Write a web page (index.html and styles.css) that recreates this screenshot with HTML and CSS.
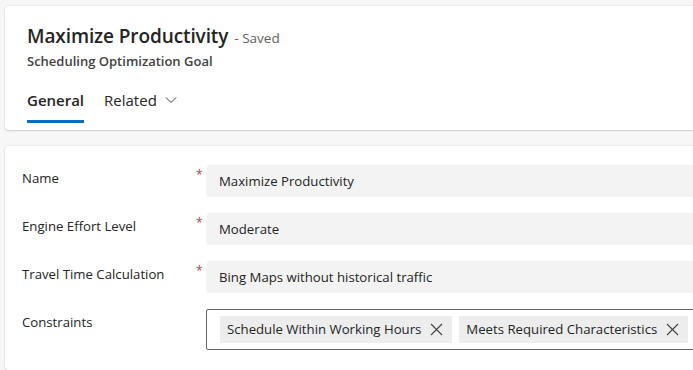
FILE: index.html
```html
<!DOCTYPE html>
<html lang="en">

<head>
    <meta charset="UTF-8">
    <meta name="viewport" content="width=device-width, initial-scale=1.0">
    <title>Maximize Productivity - Scheduling Optimization Goal</title>
    <link rel="stylesheet" href="styles.css">
</head>

<body>
    <div class="page">
        <header class="card record-header">
            <div class="title-row">
                <h1>Maximize Productivity</h1>
                <span class="save-state">- Saved</span>
            </div>
            <div class="entity-name">Scheduling Optimization Goal</div>
            <nav class="tabs">
                <div class="tab active">General</div>
                <div class="tab">
                    Related
                    <svg class="chevron" width="12" height="12" viewBox="0 0 12 12">
                        <path d="M1 3.5 L6 8.5 L11 3.5" fill="none" stroke="#424242" stroke-width="1"/>
                    </svg>
                </div>
            </nav>
        </header>

        <main class="card form">
            <div class="field">
                <label>Name</label>
                <span class="required">*</span>
                <div class="input">Maximize Productivity</div>
            </div>
            <div class="field">
                <label>Engine Effort Level</label>
                <span class="required">*</span>
                <div class="input">Moderate</div>
            </div>
            <div class="field">
                <label>Travel Time Calculation</label>
                <span class="required">*</span>
                <div class="input">Bing Maps without historical traffic</div>
            </div>
            <div class="field">
                <label>Constraints</label>
                <span></span>
                <div class="tag-box">
                    <span class="tag">Schedule Within Working Hours
                        <svg width="13" height="13" viewBox="0 0 13 13">
                            <path d="M1 1 L12 12 M12 1 L1 12" stroke="#424242" stroke-width="1.1"/>
                        </svg>
                    </span>
                    <span class="tag">Meets Required Characteristics
                        <svg width="13" height="13" viewBox="0 0 13 13">
                            <path d="M1 1 L12 12 M12 1 L1 12" stroke="#424242" stroke-width="1.1"/>
                        </svg>
                    </span>
                </div>
            </div>
        </main>
    </div>
</body>

</html>
```

FILE: styles.css
```css
:root {
    --page-background: #f7f7f7;
    --card-background: #ffffff;
    --text-color: #242424;
    --muted-color: #616161;
    --input-background: #f3f3f3;
    --tag-background: #ededed;
    --brand: #0f6cbd;
    --required: #c4314b;
}

html, body {
    height: 100%;
    overflow: hidden;
}

body {
    font-family: "Open Sans", "Noto Sans", sans-serif;
    margin: 0;
    padding: 0;
    background-color: var(--page-background);
    color: var(--text-color);
}

.page {
    height: 100vh;
    box-sizing: border-box;
    padding: 6px 0 0 5px;
    display: flex;
    flex-direction: column;
    gap: 16px;
}

.card {
    background-color: var(--card-background);
    border-radius: 4px;
    margin-right: -20px;
    box-shadow: 0 0 2px rgba(0, 0, 0, 0.12), 0 1px 2px rgba(0, 0, 0, 0.14);
}

.record-header {
    padding: 16px 22px 7px;
}

.title-row {
    display: flex;
    align-items: baseline;
    gap: 6px;
}

h1 {
    margin: 0;
    font-size: 19px;
    font-weight: 600;
    line-height: 28px;
    letter-spacing: -0.1px;
}

.save-state {
    font-size: 13.5px;
    color: var(--muted-color);
}

.entity-name {
    margin-top: 2px;
    font-size: 13px;
    font-weight: 600;
    line-height: 18px;
    color: #424242;
}

.tabs {
    display: flex;
    gap: 20px;
    margin-top: 20px;
}

.tab {
    font-size: 15px;
    line-height: 20px;
    padding-bottom: 13px;
    display: flex;
    align-items: center;
    gap: 8px;
}

.tab.active {
    font-weight: 600;
    border-bottom: 3px solid var(--brand);
    padding-bottom: 10px;
}

.form {
    padding: 19px 0 0 17px;
    flex: 1;
    overflow: hidden;
}

.field {
    display: grid;
    grid-template-columns: 174px 10px 1fr;
    margin-bottom: 16px;
    font-size: 13.2px;
}

.field label {
    padding-top: 3px;
    line-height: 20px;
}

.required {
    color: var(--required);
    font-size: 12px;
    line-height: 16px;
    padding-top: 2px;
}

.input {
    background-color: var(--input-background);
    border-radius: 4px;
    height: 32px;
    line-height: 32px;
    padding: 0 13px;
}

.tag-box {
    border: 1px solid #666666;
    border-radius: 2px;
    padding: 6px 13px;
    display: flex;
    gap: 7px;
    white-space: nowrap;
}

.tag {
    background-color: var(--tag-background);
    height: 27px;
    display: flex;
    align-items: center;
    gap: 9px;
    padding: 0 9px 0 7px;
    line-height: 27px;
}
```
